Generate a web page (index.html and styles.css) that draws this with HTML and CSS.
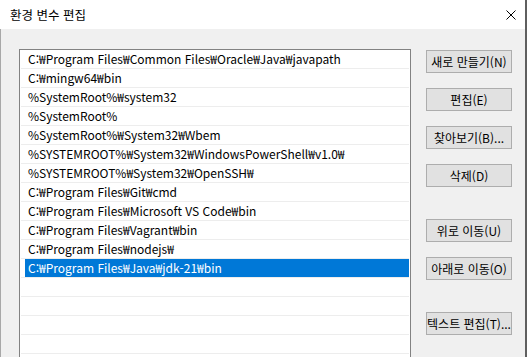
FILE: index.html
```html
<!DOCTYPE html>
<html lang="ko">
<head>
<meta charset="utf-8">
<title>환경 변수 편집</title>
<link rel="stylesheet" href="styles.css">
</head>
<body>
<div class="window">
  <div class="titlebar">
    <span class="title">환경 변수 편집</span>
    <svg class="close" width="10" height="10" viewBox="0 0 10 10"><path d="M0.5 0.5 L9.5 9.5 M9.5 0.5 L0.5 9.5" stroke="#000" stroke-width="1" fill="none"/></svg>
  </div>
  <div class="content">
    <div class="list">
      <div class="row"><span class="cell">C:₩Program Files₩Common Files₩Oracle₩Java₩javapath</span></div>
      <div class="row"><span class="cell">C:₩mingw64₩bin</span></div>
      <div class="row"><span class="cell">%SystemRoot%₩system32</span></div>
      <div class="row"><span class="cell">%SystemRoot%</span></div>
      <div class="row"><span class="cell">%SystemRoot%₩System32₩Wbem</span></div>
      <div class="row"><span class="cell">%SYSTEMROOT%₩System32₩WindowsPowerShell₩v1.0₩</span></div>
      <div class="row"><span class="cell">%SYSTEMROOT%₩System32₩OpenSSH₩</span></div>
      <div class="row"><span class="cell">C:₩Program Files₩Git₩cmd</span></div>
      <div class="row"><span class="cell">C:₩Program Files₩Microsoft VS Code₩bin</span></div>
      <div class="row"><span class="cell">C:₩Program Files₩Vagrant₩bin</span></div>
      <div class="row"><span class="cell">C:₩Program Files₩nodejs₩</span></div>
      <div class="row"><span class="cell selected">C:₩Program Files₩Java₩jdk-21₩bin</span></div>
      <div class="row"><span class="cell"></span></div>
      <div class="row"><span class="cell"></span></div>
      <div class="row"><span class="cell"></span></div>
      <div class="row"><span class="cell"></span></div>
    </div>
    <div class="buttons">
      <div class="btn">새로 만들기(N)</div>
      <div class="btn">편집(E)</div>
      <div class="btn">찾아보기(B)...</div>
      <div class="btn">삭제(D)</div>
      <div class="btn group">위로 이동(U)</div>
      <div class="btn">아래로 이동(O)</div>
      <div class="btn group">텍스트 편집(T)...</div>
    </div>
  </div>
</div>
</body>
</html>
```

FILE: styles.css
```css
html, body {
  margin: 0;
  padding: 0;
  width: 527px;
  height: 357px;
  overflow: hidden;
  background: #f0f0f0;
}
body {
  font-family: "Noto Sans CJK KR", "Noto Sans", sans-serif;
  font-size: 12px;
  color: #000;
}
.window {
  width: 527px;
  height: 357px;
  box-sizing: border-box;
  border-right: 2px solid #5f5f5f;
  display: flex;
  flex-direction: column;
  overflow: hidden;
}
.titlebar {
  height: 29px;
  flex: none;
  background: #fff;
  display: flex;
  align-items: center;
  justify-content: space-between;
  padding-left: 10px;
  padding-top: 1px;
  box-sizing: border-box;
}
.title {
  font-size: 12.5px;
  line-height: 16px;
}
.close {
  margin-right: 9px;
  display: block;
}
.content {
  flex: 1;
  display: flex;
  align-items: flex-start;
  border-left: 1px solid #a8a8a8;
  padding: 20px 0 0 18px;
  min-height: 0;
  overflow: hidden;
}
.list {
  width: 392px;
  align-self: stretch;
  box-sizing: border-box;
  border: 1px solid #828282;
  border-bottom: 0;
  background: #fff;
  padding: 0 1px;
  flex: none;
  overflow: hidden;
}
.row {
  height: 18px;
  border-bottom: 1px solid #ededed;
  padding-left: 4px;
  display: flex;
}
.cell {
  flex: 1;
  display: block;
  height: 18px;
  line-height: 18px;
  padding-left: 3px;
  white-space: nowrap;
}
.cell.selected {
  background: #0078d7;
  color: #fff;
}
.buttons {
  margin-left: 15px;
  padding-top: 1px;
  width: 86px;
  display: flex;
  flex-direction: column;
  gap: 15px;
}
.btn {
  height: 23px;
  box-sizing: border-box;
  border: 1px solid #adadad;
  background: #e1e1e1;
  display: flex;
  align-items: center;
  justify-content: center;
  white-space: nowrap;
  font-size: 12px;
}
.btn.group {
  margin-top: 17px;
}
```
